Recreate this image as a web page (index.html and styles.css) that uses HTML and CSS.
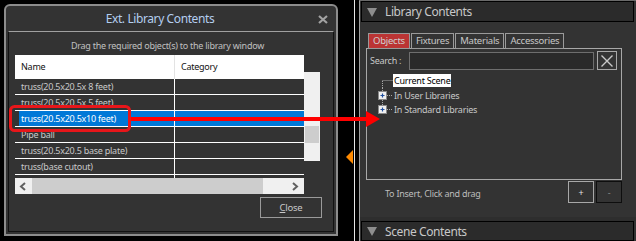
FILE: index.html
```html
<!DOCTYPE html>
<html>
<head>
  <title>Ext. Library Contents</title>
  <link rel="stylesheet" href="styles.css">
</head>
<body>
  <div class="dialog">
    <div class="titlebar">
      <span class="title">Ext. Library Contents</span>
      <span class="closex">
        <svg width="10" height="9" viewBox="0 0 10 9"><path d="M1 1 L9 8 M9 1 L1 8" stroke="#a2a2a2" stroke-width="2.2"/></svg>
      </span>
    </div>
    <div class="inner">
      <p class="hint">Drag the required object(s) to the library window</p>
      <div class="listarea">
        <div class="list">
          <div class="row head"><div class="cell">Name</div><div class="cell">Category</div></div>
          <div class="row"><div class="cell"><span>truss(20.5x20.5x 8 feet)</span></div><div class="cell"></div></div>
          <div class="row"><div class="cell"><span>truss(20.5x20.5x 5 feet)</span></div><div class="cell"></div></div>
          <div class="row selected"><div class="cell"><span>truss(20.5x20.5x10 feet)</span></div><div class="cell"></div></div>
          <div class="row"><div class="cell"><span>Pipe ball</span></div><div class="cell"></div></div>
          <div class="row"><div class="cell"><span>truss(20.5x20.5 base plate)</span></div><div class="cell"></div></div>
          <div class="row"><div class="cell"><span>truss(base cutout)</span></div><div class="cell"></div></div>
          <div class="row filler"><div class="cell"></div><div class="cell"></div></div>
        </div>
        <div class="vscroll"><div class="vthumb"></div></div>
      </div>
      <div class="hscroll">
        <span class="harrow">
          <svg width="8" height="9" viewBox="0 0 8 9"><path d="M6 1 L2 4.5 L6 8" fill="none" stroke="#606060" stroke-width="2"/></svg>
        </span>
        <span class="hthumb"></span>
        <span class="hrest">
          <svg width="8" height="9" viewBox="0 0 8 9"><path d="M2 1 L6 4.5 L2 8" fill="none" stroke="#606060" stroke-width="2"/></svg>
        </span>
      </div>
      <div class="actions">
        <button class="btn-close"><u>C</u>lose</button>
      </div>
    </div>
  </div>

  <div class="splitter"><span class="handle"></span></div>
  <div class="edge"></div>

  <div class="panel">
    <div class="section-head">
      <span class="caret"></span>
      <span class="section-title">Library Contents</span>
    </div>
    <div class="section-body">
      <div class="tabs">
        <span class="tab active">Objects</span>
        <span class="tab">Fixtures</span>
        <span class="tab">Materials</span>
        <span class="tab">Accessories</span>
      </div>
      <div class="tabbox">
        <div class="search">
          <label for="search">Search :</label>
          <input type="text" id="search">
          <span class="clear">
            <svg width="14" height="14" viewBox="0 0 14 14"><path d="M1.5 1.5 L12.5 12.5 M12.5 1.5 L1.5 12.5" stroke="#c8c8c8" stroke-width="1.4"/></svg>
          </span>
        </div>
        <div class="tree">
          <div class="node">
            <svg class="joint" width="15" height="14" viewBox="0 0 15 14"><path d="M4.5 7 V14 M4.5 6.5 H15" stroke="#a8a8a8" stroke-dasharray="1 1"/></svg>
            <span class="label current">Current Scene</span>
          </div>
          <div class="node">
            <svg class="joint" width="15" height="14" viewBox="0 0 15 14">
              <path d="M4.5 0 V3 M4.5 12 V14 M9 7.5 H15" stroke="#a8a8a8" stroke-dasharray="1 1"/>
              <rect x="0.5" y="3.5" width="8" height="8" fill="#f0f0f0" stroke="#8a8a8a"/>
              <path d="M2.5 7.5 H6.5 M4.5 5.5 V9.5" stroke="#1f4f9f" stroke-width="1.2"/>
            </svg>
            <span class="label">In User Libraries</span>
          </div>
          <div class="node">
            <svg class="joint" width="15" height="14" viewBox="0 0 15 14">
              <path d="M4.5 0 V3 M9 7.5 H15" stroke="#a8a8a8" stroke-dasharray="1 1"/>
              <rect x="0.5" y="3.5" width="8" height="8" fill="#f0f0f0" stroke="#8a8a8a"/>
              <path d="M2.5 7.5 H6.5 M4.5 5.5 V9.5" stroke="#1f4f9f" stroke-width="1.2"/>
            </svg>
            <span class="label">In Standard Libraries</span>
          </div>
        </div>
      </div>
      <div class="insert-row">
        <span class="insert-hint">To Insert, Click and drag</span>
        <button class="small-btn plus">+</button>
        <button class="small-btn minus">-</button>
      </div>
    </div>
    <div class="section-head bottom">
      <span class="caret"></span>
      <span class="section-title">Scene Contents</span>
    </div>
  </div>

  <svg class="annot" width="636" height="241" viewBox="0 0 636 241">
    <rect x="10.5" y="106.5" width="119" height="24" rx="4" fill="none" stroke="#e8161a" stroke-width="3"/>
    <rect x="131" y="117" width="237" height="4" fill="#ff0000"/>
    <polygon points="366,111 380,119 366,127" fill="#ff0000"/>
  </svg>
</body>
</html>
```

FILE: styles.css
```css
body {
  margin: 0;
  height: 241px;
  overflow: hidden;
  position: relative;
  display: flex;
  background-color: #000;
  font-family: "Noto Sans", "Open Sans", sans-serif;
  font-size: 9px;
  letter-spacing: -0.25px;
  color: #c8c8c8;
}

button {
  font-family: inherit;
  letter-spacing: inherit;
}

/* dialog */

.dialog {
  box-sizing: border-box;
  width: 334px;
  height: 232px;
  margin: 4px 0 0 4px;
  border: 2px solid #8c8c8c;
  border-radius: 6px 6px 0 0;
  background-color: #333;
  display: flex;
  flex-direction: column;
}

.titlebar {
  height: 25px;
  display: flex;
  align-items: center;
}

.title {
  flex: 1;
  text-align: center;
  padding-left: 6px;
  font-size: 12px;
  letter-spacing: -0.4px;
  color: #b3cef0;
}

.closex {
  width: 10px;
  height: 9px;
  margin: 1px 8px 0 10px;
  display: flex;
}

.inner {
  flex: 1;
  margin: 0 2px 2px;
  border: 1px solid #111;
  border-top-color: #a0a0a0;
  padding: 7px 0 0 6px;
}

.hint {
  margin: 0 0 2px;
  width: 305px;
  line-height: 14px;
  text-align: center;
  color: #c0c0c0;
}

.listarea {
  display: flex;
  align-items: flex-start;
}

.list {
  width: 289px;
  height: 123px;
  overflow: hidden;
}

.row {
  display: grid;
  grid-template-columns: 160px 129px;
  height: 16px;
  box-sizing: border-box;
  border-bottom: 1px solid #fff;
}

.cell {
  padding-left: 4px;
  line-height: 15px;
  white-space: nowrap;
}

.cell:first-child {
  border-right: 1px solid #fff;
}

.cell span {
  padding-left: 2px;
}

.row.head {
  height: 24px;
  border-bottom: none;
  background-color: #fff;
  color: #111;
}

.row.head .cell {
  line-height: 24px;
  padding-left: 6px;
}

.row.head .cell:first-child {
  border-right-color: #e3e3e3;
}

.row.selected .cell {
  background-color: #0078d7;
  background-clip: content-box;
  color: #fff;
}

.row.selected .cell:last-child {
  padding-left: 0;
}

.row.filler {
  height: 3px;
  border-bottom: none;
}

.vscroll {
  width: 16px;
  height: 89px;
  margin-top: 17px;
  background-color: #f0f0f0;
  padding-top: 54px;
  box-sizing: border-box;
}

.vthumb {
  height: 17px;
  margin: 0 1px;
  background-color: #cdcdcd;
}

.hscroll {
  width: 289px;
  height: 16px;
  display: flex;
  background-color: #f0f0f0;
}

.harrow {
  width: 17px;
  display: flex;
  align-items: center;
  padding-left: 4px;
  box-sizing: border-box;
}

.hthumb {
  width: 231px;
  background-color: #cdcdcd;
}

.hrest {
  flex: 1;
  display: flex;
  align-items: center;
  justify-content: flex-end;
  padding-right: 5px;
}

.actions {
  width: 307px;
  margin-top: 3px;
  display: flex;
  justify-content: flex-end;
}

.btn-close {
  width: 62px;
  height: 21px;
  padding: 0;
  border: 1px solid #9a9a9a;
  background-color: #333;
  color: #c8c8c8;
  font-size: 9.5px;
}

/* splitter */

.splitter {
  width: 16px;
  padding-top: 150px;
  box-sizing: border-box;
}

.handle {
  display: block;
  width: 0;
  height: 0;
  margin-left: 8px;
  border-top: 7.5px solid transparent;
  border-bottom: 7.5px solid transparent;
  border-right: 7px solid #ff8a00;
}

.edge {
  width: 5px;
  box-sizing: border-box;
  border-left: 1px solid #e6e6e6;
}

/* library panel */

.panel {
  flex: 1;
  display: flex;
  flex-direction: column;
  border-left: 1px solid #a0a0a0;
  border-top: 1px solid #6a6a6a;
  background-color: #333;
}

.section-head {
  height: 21px;
  box-sizing: border-box;
  margin: 0 2px 0 1px;
  border: 1px solid #000;
  background-color: #2b2b2b;
  display: flex;
  align-items: center;
}

.section-head.bottom {
  height: 20px;
}

.caret {
  width: 0;
  height: 0;
  margin: 1px 8px 0 5px;
  border-left: 5.5px solid transparent;
  border-right: 5.5px solid transparent;
  border-top: 9px solid #8e8e8e;
}

.section-title {
  font-size: 12px;
  letter-spacing: -0.4px;
  color: #c8c8c8;
}

.section-body {
  flex: 1;
  padding: 11px 0 0 6px;
  border-bottom: 4px solid #2e2e2e;
}

.tabs {
  display: flex;
  margin-left: 2px;
  margin-bottom: -1px;
}

.tab {
  height: 16px;
  box-sizing: border-box;
  padding: 0 4px;
  margin-right: 1px;
  border: 1px solid #9a9a9a;
  font-size: 9.5px;
  line-height: 14px;
  color: #c8c8c8;
}

.tab.active {
  background-color: #bb3434;
  color: #d0d0d0;
}

.tabbox {
  width: 256px;
  height: 132px;
  box-sizing: border-box;
  border: 1px solid #a8a8a8;
}

.search {
  display: flex;
  align-items: center;
  margin-top: 2px;
  padding-left: 3px;
}

.search label {
  width: 39px;
}

.search input {
  width: 185px;
  height: 18px;
  box-sizing: border-box;
  margin: 0;
  border: 1px solid #6e6e6e;
  background-color: #2a2a2a;
}

.clear {
  width: 20px;
  height: 19px;
  box-sizing: border-box;
  margin-left: 3px;
  border: 1px solid #a8a8a8;
  display: flex;
  align-items: center;
  justify-content: center;
}

.tree {
  margin-top: 4px;
  padding-left: 11px;
}

.node {
  height: 14px;
  display: flex;
  align-items: center;
}

.joint {
  display: block;
  flex: none;
}

.label {
  padding-left: 1px;
  line-height: 13px;
}

.label.current {
  background-color: #fff;
  color: #000;
  padding: 0 1px;
  margin-top: -1px;
}

.insert-row {
  width: 256px;
  margin-top: 1px;
  display: flex;
  align-items: center;
}

.insert-hint {
  flex: 1;
  padding: 2px 0 0 19px;
  color: #bdbdbd;
}

.small-btn {
  width: 26px;
  height: 22px;
  padding: 0;
  margin-left: 2px;
  background-color: #333;
  font-size: 9px;
}

.small-btn.plus {
  border: 1px solid #a8a8a8;
  color: #e0e0e0;
}

.small-btn.minus {
  border: 1px solid #0e0e0e;
  color: #8a8a8a;
}

/* annotation drawn on top of the screenshot */

.annot {
  position: absolute;
  top: 0;
  left: 0;
  pointer-events: none;
}
```
